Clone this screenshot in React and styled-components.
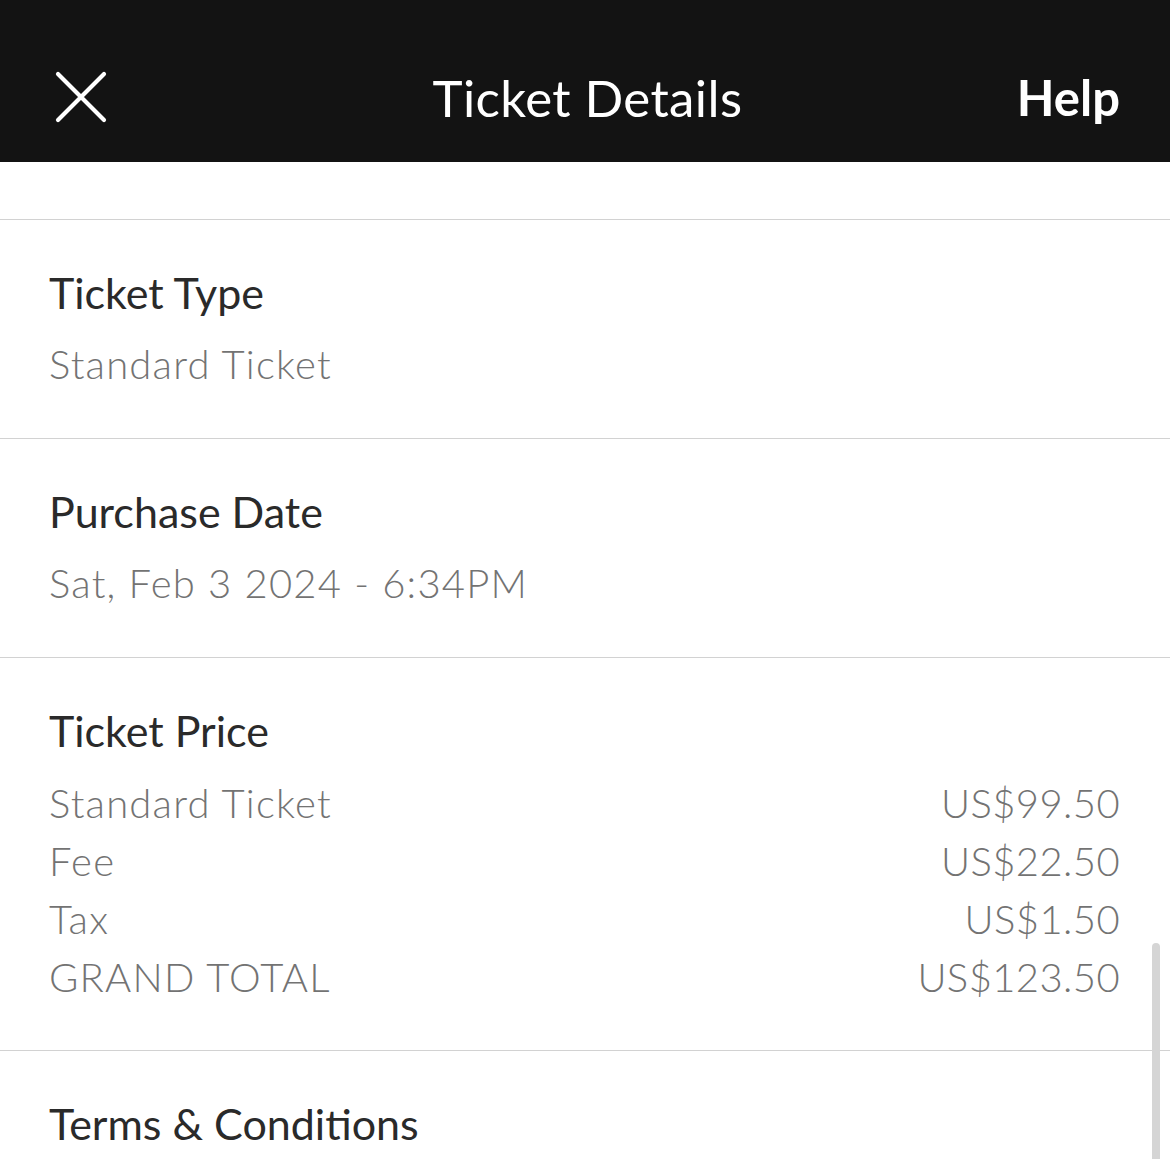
import React from "react"
import styled, { createGlobalStyle } from "styled-components"

const GlobalStyle = createGlobalStyle`
  html, body {
    margin: 0;
    padding: 0;
    background: #ffffff;
  }
  body {
    font-family: "Lato", "Noto Sans", sans-serif;
    -webkit-font-smoothing: antialiased;
  }
`

const prices = [
  { label: "Standard Ticket", amount: "US$99.50" },
  { label: "Fee", amount: "US$22.50" },
  { label: "Tax", amount: "US$1.50" },
  { label: "GRAND TOTAL", amount: "US$123.50" },
]

const CloseIcon = () => (
  <svg width="52" height="52" viewBox="0 0 52 52" fill="none">
    <path
      d="M3 3 L49 49 M49 3 L3 49"
      stroke="#ffffff"
      strokeWidth="4.2"
      strokeLinecap="round"
    />
  </svg>
)

const App = () => {
  return (
    <>
      <GlobalStyle />
      <Screen>
        <Header>
          <CloseButton aria-label="Close">
            <CloseIcon />
          </CloseButton>
          <HeaderTitle>Ticket Details</HeaderTitle>
          <HelpLink>Help</HelpLink>
        </Header>

        <Content>
          <TopGap />

          <Section>
            <SectionTitle>Ticket Type</SectionTitle>
            <SectionValue>Standard Ticket</SectionValue>
          </Section>

          <Section>
            <SectionTitle>Purchase Date</SectionTitle>
            <SectionValue>Sat, Feb 3 2024 - 6:34PM</SectionValue>
          </Section>

          <Section $bottom={44}>
            <SectionTitle>Ticket Price</SectionTitle>
            <PriceList>
              {prices.map((p) => (
                <PriceRow key={p.label}>
                  <span>{p.label}</span>
                  <Amount>{p.amount}</Amount>
                </PriceRow>
              ))}
            </PriceList>
          </Section>

          <Section $last>
            <SectionTitle>Terms &amp; Conditions</SectionTitle>
          </Section>

          <Scrollbar />
        </Content>
      </Screen>
    </>
  )
}

export default App

const Screen = styled.div`
  width: 1170px;
  height: 1159px;
  overflow: hidden;
  background: #ffffff;
`

const Header = styled.header`
  display: grid;
  grid-template-columns: 1fr auto 1fr;
  align-items: center;
  height: 162px;
  padding: 32px 50px 0 55px;
  box-sizing: border-box;
  background-color: #131313;
  color: #ffffff;
`

const CloseButton = styled.div`
  display: flex;
  align-items: center;
  justify-self: start;
`

const HeaderTitle = styled.h1`
  margin: 0;
  font-size: 51px;
  font-weight: 400;
  letter-spacing: 0.4px;
`

const HelpLink = styled.span`
  justify-self: end;
  font-size: 49px;
  font-weight: 700;
`

const Content = styled.main`
  position: relative;
`

const TopGap = styled.div`
  height: 57px;
  border-bottom: 1px solid #d2d2d2;
`

const Section = styled.section`
  display: flex;
  flex-direction: column;
  padding: 39px 50px ${(p) => (p.$bottom ? p.$bottom : 39)}px 49px;
  border-bottom: ${(p) => (p.$last ? "none" : "1px solid #d2d2d2")};
`

const SectionTitle = styled.h2`
  margin: 0;
  height: 70px;
  line-height: 68px;
  font-size: 43px;
  font-weight: 400;
  color: #2a2a2a;
`

const SectionValue = styled.p`
  margin: 0;
  height: 70px;
  line-height: 70px;
  font-size: 40px;
  font-weight: 300;
  letter-spacing: 1.2px;
  color: #737373;
`

const PriceList = styled.div`
  display: flex;
  flex-direction: column;
  padding-top: 7px;
`

const PriceRow = styled.div`
  display: flex;
  justify-content: space-between;
  align-items: center;
  height: 58px;
  font-size: 40px;
  font-weight: 300;
  letter-spacing: 1.2px;
  color: #737373;
`

const Amount = styled.span`
  letter-spacing: 0.4px;
`

const Scrollbar = styled.div`
  position: absolute;
  top: 781px;
  right: 10px;
  width: 8px;
  height: 400px;
  border-radius: 4px;
  background: #d5d5d5;
`
